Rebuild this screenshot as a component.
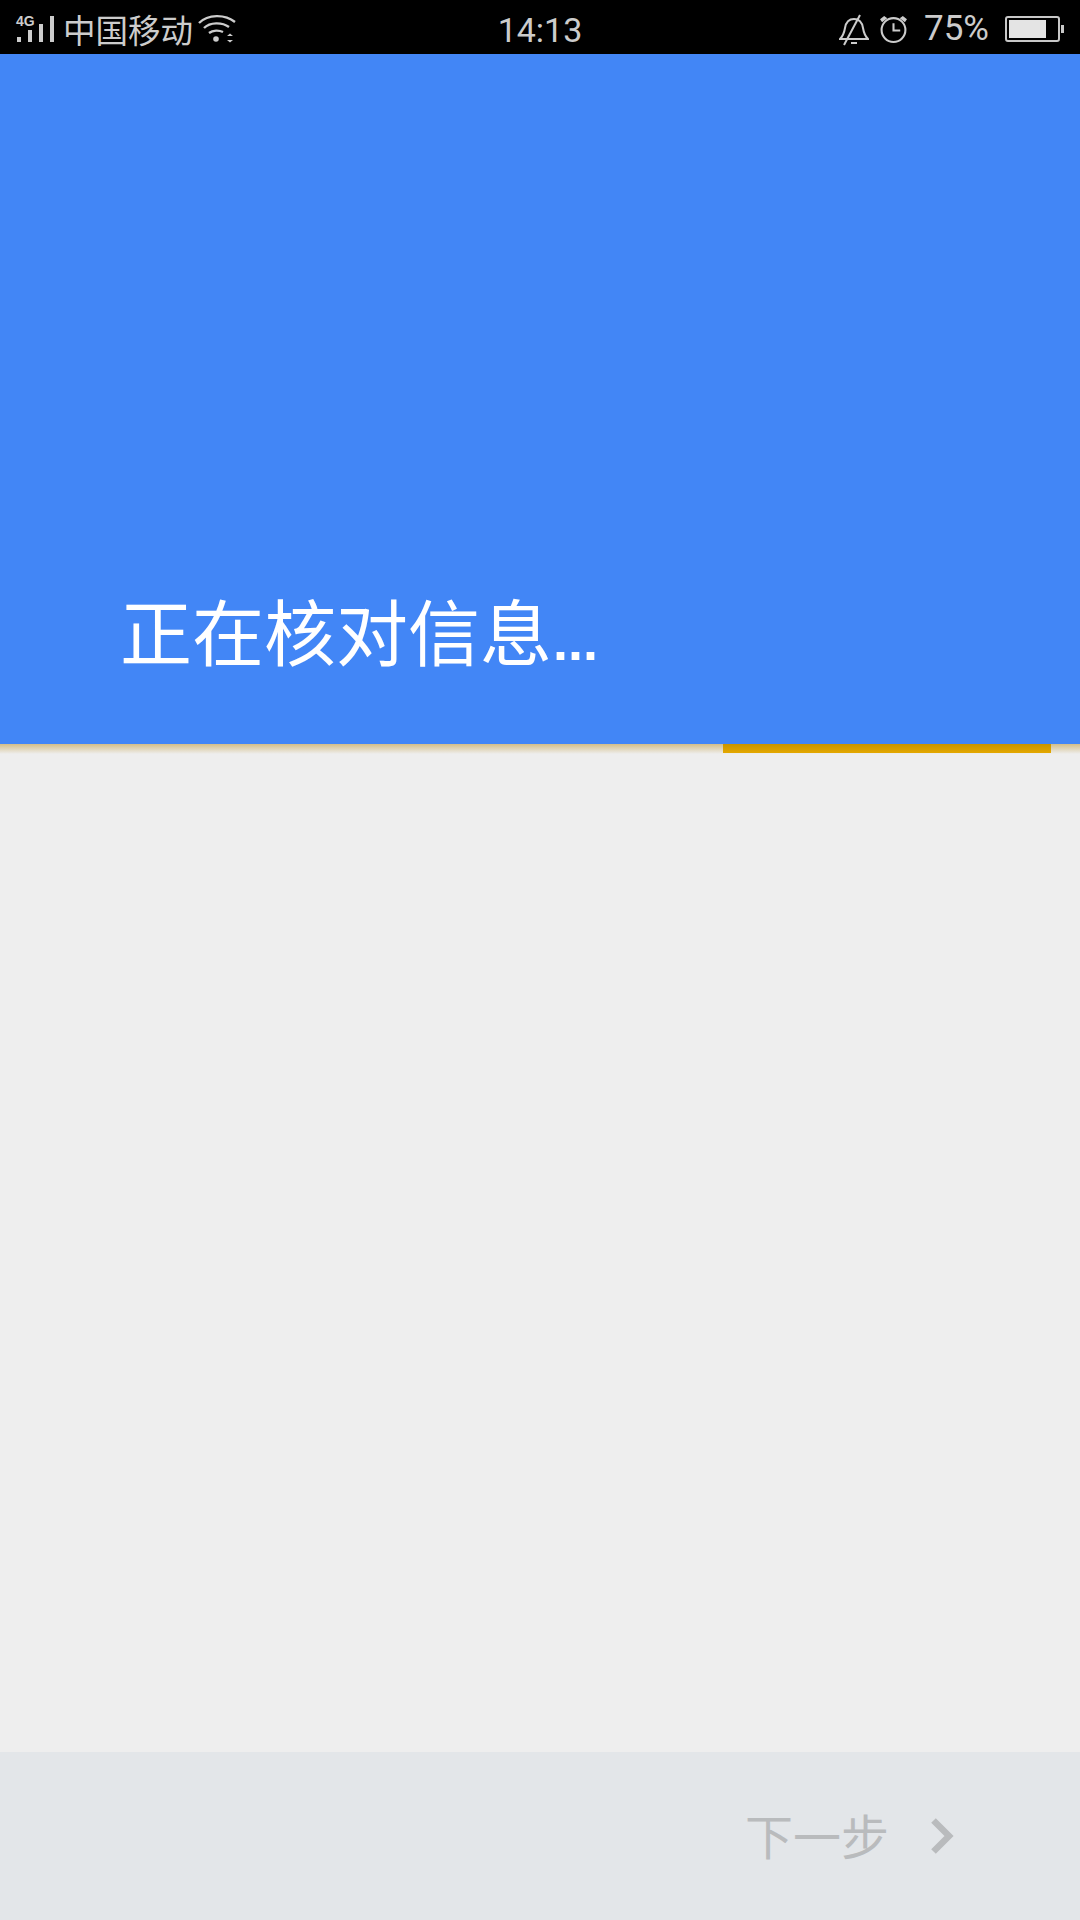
<script>
</script>

<div class="screen">
  <div class="status">
    <div class="left">
      <span class="sig">
        <span class="tag">4G</span>
        <svg width="40" height="26" viewBox="0 0 40 26"><g fill="#cccccc"><rect x="1" y="21" width="4" height="5"/><rect x="12" y="14" width="4" height="12"/><rect x="23" y="8" width="4" height="18"/><rect x="34" y="0" width="4" height="26"/></g></svg>
      </span>
      <span class="carrier">中国移动</span>
      <svg class="wifi" width="40" height="30" viewBox="0 0 38 30" fill="none" stroke="#cccccc" stroke-width="2.400"><path d="M1 9C10 0 27 0 37 8"/><path d="M6 14C12 8 24 8 31 13"/><path d="M11 19c4-3 10-3 14-1"/><circle cx="18" cy="25" r="2.800" fill="#cccccc" stroke="none"/><path d="M29 22l3-2.500 3 2.500z M29 26l3 2.500 3-2.500z" fill="#cccccc" stroke="none"/></svg>
    </div>
    <div class="time">14:13</div>
    <div class="right">
      <svg class="bell" width="30" height="32" viewBox="0 0 30 32" fill="none" stroke="#cccccc" stroke-width="2"><path d="M1 25c3-3 4-5 5-11 1-6 4-9 9-9s8 3 9 9c1 6 2 8 5 11z"/><path d="M21 1L5 31"/><path d="M12 29h6"/></svg>
      <svg class="clock" width="29" height="29" viewBox="0 0 28 28" fill="none" stroke="#cccccc" stroke-width="2"><circle cx="14" cy="15.500" r="11.500"/><path d="M14 9v7h6.500"/><path d="M1 5l4-3 3 2-5 4zM27 5l-4-3-3 2 5 4z" fill="#cccccc" stroke="none"/></svg>
      <span class="pct">75%</span>
      <span class="batt"><span class="level"></span></span><span class="nub"></span>
    </div>
  </div>

  <header class="hero">
    <h1>正在核对信息<span class="dots">...</span></h1>
  </header>
  <div class="progress"><span class="bar"></span></div>

  <main class="body"></main>

  <footer class="foot">
    <span class="next">下一步</span>
    <svg width="24" height="36" viewBox="0 0 24 36" fill="none" stroke="#b9bbbd" stroke-width="6.500"><path d="M2.500 2.500L18 18 2.500 33.500"/></svg>
  </footer>
</div>

<style>
  :global(body) { margin: 0; background: #eeeeee; }
  .screen {
    width: 1080px;
    height: 1920px;
    display: flex;
    flex-direction: column;
    overflow: hidden;
    font-family: "Noto Sans CJK SC", "Noto Sans", sans-serif;
  }
  .status {
    height: 54px;
    background: #000;
    color: #cccccc;
    display: grid;
    grid-template-columns: 1fr auto 1fr;
    align-items: center;
    flex: none;
  }
  .left { display: flex; align-items: center; padding-left: 16px; }
  .sig { position: relative; display: block; width: 40px; height: 26px; }
  .sig svg { display: block; }
  .tag {
    position: absolute; left: 0; top: -1px;
    font: 700 14px/12px "Liberation Sans", sans-serif;
  }
  .carrier { font-size: 32.500px; line-height: 54px; margin-left: 7px; }
  .wifi { margin-left: 4px; }
  .time { font: 400 34px/54px "Roboto", "Liberation Sans", sans-serif; padding-top: 3px; }
  .right { display: flex; align-items: center; justify-content: flex-end; padding-right: 16px; }
  .bell { margin-top: 2px; }
  .clock { margin-left: 10px; margin-top: -1px; }
  .pct { font: 400 35px/54px "Roboto", "Liberation Sans", sans-serif; margin-left: 16px; }
  .batt {
    margin-left: 16px;
    width: 55px; height: 26px;
    box-sizing: border-box;
    border: 2px solid #c8c8c8;
    border-radius: 3px;
    padding: 2px;
    display: flex;
  }
  .level { width: 37px; background: #e4e4e4; }
  .nub { width: 3px; height: 8px; background: #c8c8c8; margin-left: 1px; }
  .hero {
    flex: none;
    height: 690px;
    box-sizing: border-box;
    background: #4286f6;
    display: flex;
    align-items: flex-end;
    padding: 0 0 63px 120px;
  }
  h1 {
    margin: 0;
    color: #fff;
    font-weight: 400;
    font-size: 72px;
    line-height: 80px;
  }
  .dots {
    font: 700 54px/80px "Liberation Sans", sans-serif;
    margin-left: 1px;
  }
  .progress {
    flex: none;
    height: 10px;
    position: relative;
    background: linear-gradient(#d4be88, #eeeeee);
  }
  .bar {
    position: absolute;
    left: 723px;
    width: 328px;
    top: 0;
    height: 9px;
    background: linear-gradient(#c99400, #e4a800);
  }
  .body { flex: 1; background: #eeeeee; }
  .foot {
    flex: none;
    height: 168px;
    box-sizing: border-box;
    background: #e3e6e9;
    display: flex;
    align-items: center;
    justify-content: flex-end;
    padding: 0 125px 0 0;
    color: #b9bbbd;
  }
  .next { font-size: 48px; margin: -4px 42px 0 0; line-height: 60px; }
</style>
